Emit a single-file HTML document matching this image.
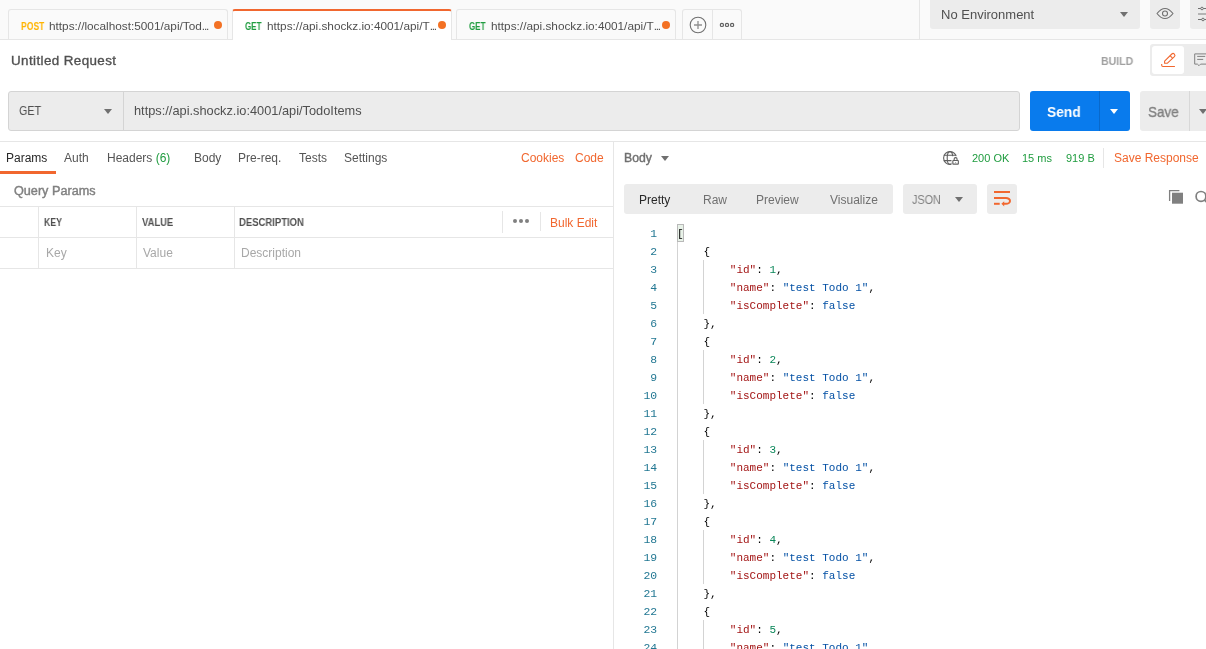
<!DOCTYPE html>
<html><head><meta charset="utf-8">
<style>
html,body{margin:0;padding:0;width:1206px;height:649px;overflow:hidden;background:#fff;font-family:"Liberation Sans",sans-serif;}
.a,.t,.b,.code,.ln,.tri{will-change:transform;}
.a{position:absolute;}
.t{position:absolute;white-space:nowrap;line-height:1;font-size:12px;color:#505050;}
.b{position:absolute;box-sizing:border-box;}
.code{position:absolute;left:677px;top:225px;font-family:"Liberation Mono",monospace;font-size:11px;line-height:18px;white-space:pre;color:#000;}
.ln{position:absolute;left:630px;width:27.2px;top:225px;font-family:"Liberation Mono",monospace;font-size:11.4px;line-height:18px;text-align:right;color:#237893;white-space:pre;}
.k{color:#a31515}.s{color:#0451a5}.n{color:#098658}.f{color:#0451a5}
.tri{position:absolute;width:0;height:0;border-left:4px solid transparent;border-right:4px solid transparent;border-top:5px solid #707070;}
</style></head><body>
<!-- top tab bar -->
<div class="b" style="left:0;top:0;width:1206px;height:40px;background:#fafafa;border-bottom:1px solid #e6e6e6;"></div>
<!-- tab1 -->
<div class="b" style="left:8px;top:9px;width:220px;height:30px;border:1px solid #e6e6e6;border-bottom:none;border-radius:3px 3px 0 0;background:#fafafa;"></div>
<div class="t" style="left:21px;top:21.5px;font-size:10px;font-weight:700;color:#ffb400;transform:scaleX(0.86);transform-origin:0 0;">POST</div>
<div class="t" style="left:49px;top:20.5px;font-size:11.8px;">https://localhost:5001/api/Tod<span style="letter-spacing:-1.2px">...</span></div>
<div class="a" style="left:214px;top:21px;width:8px;height:8px;border-radius:50%;background:#f37124;"></div>
<!-- tab2 active -->
<div class="b" style="left:232px;top:9px;width:220px;height:31px;border:1px solid #e6e6e6;border-bottom:none;border-top:2px solid #f1672f;background:#fff;border-radius:3px 3px 0 0;"></div>
<div class="t" style="left:245px;top:21.5px;font-size:10px;font-weight:700;color:#1f9c3f;transform:scaleX(0.8);transform-origin:0 0;">GET</div>
<div class="t" style="left:267px;top:20.5px;font-size:11.8px;">https://api.shockz.io:4001/api/T<span style="letter-spacing:-1.2px">...</span></div>
<div class="a" style="left:438px;top:21px;width:8px;height:8px;border-radius:50%;background:#f37124;"></div>
<!-- tab3 -->
<div class="b" style="left:456px;top:9px;width:220px;height:30px;border:1px solid #e6e6e6;border-bottom:none;border-radius:3px 3px 0 0;background:#fafafa;"></div>
<div class="t" style="left:469px;top:21.5px;font-size:10px;font-weight:700;color:#1f9c3f;transform:scaleX(0.8);transform-origin:0 0;">GET</div>
<div class="t" style="left:491px;top:20.5px;font-size:11.8px;">https://api.shockz.io:4001/api/T<span style="letter-spacing:-1.2px">...</span></div>
<div class="a" style="left:662px;top:21px;width:8px;height:8px;border-radius:50%;background:#f37124;"></div>
<!-- plus / more -->
<div class="b" style="left:682px;top:9px;width:60px;height:30px;border:1px solid #e6e6e6;border-bottom:none;border-radius:3px 3px 0 0;background:#fafafa;"></div>
<div class="a" style="left:712px;top:10px;width:1px;height:29px;background:#e6e6e6;"></div>
<svg class="a" style="left:689px;top:16px" width="18" height="18" viewBox="0 0 18 18"><circle cx="9" cy="9" r="7.8" fill="none" stroke="#707070" stroke-width="1.1"/><path d="M9 5v8M5 9h8" stroke="#909090" stroke-width="1.3"/></svg>
<svg class="a" style="left:712px;top:15px" width="30" height="20" viewBox="0 0 30 20"><circle cx="9.9" cy="9.9" r="1.6" fill="none" stroke="#606060" stroke-width="1.2"/><circle cx="15" cy="9.9" r="1.6" fill="none" stroke="#606060" stroke-width="1.2"/><circle cx="20.1" cy="9.9" r="1.6" fill="none" stroke="#606060" stroke-width="1.2"/></svg>
<!-- env -->
<div class="a" style="left:919px;top:0;width:1px;height:39px;background:#e6e6e6;"></div>
<div class="b" style="left:930px;top:-4px;width:210px;height:33px;background:#ececec;border-radius:3px;"></div>
<div class="t" style="left:941px;top:8px;font-size:13px;">No Environment</div>
<div class="tri" style="left:1120px;top:12px;"></div>
<div class="b" style="left:1150px;top:-4px;width:30px;height:33px;background:#ececec;border-radius:3px;"></div>
<svg class="a" style="left:1150px;top:0px" width="30" height="28" viewBox="0 0 30 28"><path d="M7 13.5Q15 3.4 23 13.5Q15 23.6 7 13.5Z" fill="none" stroke="#707070" stroke-width="1.1" stroke-linejoin="round"/><circle cx="15" cy="13.5" r="2.5" fill="none" stroke="#707070" stroke-width="1.1"/></svg>
<div class="b" style="left:1190px;top:-4px;width:30px;height:33px;background:#ececec;border-radius:3px;"></div>
<svg class="a" style="left:1190px;top:0px" width="16" height="28" viewBox="0 0 16 28"><path d="M8 8.5h10M8 19.5h10" stroke="#707070" stroke-width="1"/><path d="M8 14h10" stroke="#b4b4b4" stroke-width="2"/><circle cx="12" cy="8.5" r="1.3" fill="#ececec" stroke="#707070" stroke-width="1"/><circle cx="13" cy="19.5" r="1.3" fill="#ececec" stroke="#707070" stroke-width="1"/></svg>

<!-- request name row -->
<div class="t" style="left:11px;top:54px;font-size:13.4px;font-weight:400;color:#505050;-webkit-text-stroke:0.35px #505050;letter-spacing:0.4px;">Untitled Request</div>
<div class="t" style="left:1101px;top:56px;font-size:11.5px;font-weight:700;color:#a0a0a0;transform:scaleX(0.92);transform-origin:0 0;">BUILD</div>
<div class="b" style="left:1150px;top:44px;width:60px;height:32px;background:#ececec;border-radius:3px;"></div>
<div class="b" style="left:1152px;top:46px;width:32px;height:28px;background:#fff;border-radius:3px;"></div>
<svg class="a" style="left:1150px;top:42px" width="56" height="38" viewBox="0 0 56 38"><path d="M14.6 19.2L21.8 12A1.84 1.84 0 0 1 24.4 14.6L17.2 21.3H14.6Z" fill="none" stroke="#f1672f" stroke-width="1.1" stroke-linejoin="round"/><path d="M20.1 13.7L22.7 16.3" stroke="#f1672f" stroke-width="1.1"/><path d="M11.7 22v1.3q0 1.2 1.2 1.2H24.9" fill="none" stroke="#f1672f" stroke-width="1.1"/><path d="M44.7 11.9H58V22.1H50.6L49 23.7L47.4 22.1H44.7Z" fill="none" stroke="#808080" stroke-width="1"/><path d="M47.2 14.4h8M47.2 17.4h6" stroke="#808080" stroke-width="1"/></svg>

<!-- url row -->
<div class="b" style="left:8px;top:91px;width:1012px;height:40px;background:#ececec;border:1px solid #d4d4d4;border-radius:3px;"></div>
<div class="a" style="left:123px;top:92px;width:1px;height:38px;background:#d4d4d4;"></div>
<div class="t" style="left:19px;top:105px;font-size:12px;color:#505050;transform:scaleX(0.9);transform-origin:0 0;">GET</div>
<div class="tri" style="left:104px;top:109px;"></div>
<div class="t" style="left:134px;top:105px;font-size:12.8px;color:#505050;">https://api.shockz.io:4001/api/TodoItems</div>
<div class="b" style="left:1030px;top:91px;width:100px;height:40px;background:#097bed;border-radius:3px;"></div>
<div class="a" style="left:1099px;top:91px;width:1px;height:40px;background:#0869cc;"></div>
<div class="t" style="left:1047px;top:104px;font-size:15px;font-weight:700;color:#fff;transform:scaleX(0.92);transform-origin:0 0;">Send</div>
<div class="tri" style="left:1110px;top:109px;border-top-color:#fff;"></div>
<div class="b" style="left:1140px;top:91px;width:80px;height:40px;background:#ececec;border-radius:3px;"></div>
<div class="a" style="left:1189px;top:91px;width:1px;height:40px;background:#d8d8d8;"></div>
<div class="t" style="left:1148px;top:104px;font-size:15px;color:#808080;-webkit-text-stroke:0.35px #808080;transform:scaleX(0.9);transform-origin:0 0;">Save</div>
<div class="tri" style="left:1199px;top:109px;"></div>

<!-- divider -->
<div class="a" style="left:0;top:141px;width:1206px;height:1px;background:#e6e6e6;"></div>
<div class="a" style="left:613px;top:142px;width:1px;height:507px;background:#e6e6e6;"></div>

<!-- left pane -->
<div class="t" style="left:6px;top:152px;color:#282828;">Params</div>
<div class="a" style="left:0;top:171px;width:56px;height:3px;background:#f1672f;"></div>
<div class="t" style="left:64px;top:152px;color:#555;">Auth</div>
<div class="t" style="left:107px;top:152px;color:#555;">Headers <span style="color:#1f9c3f">(6)</span></div>
<div class="t" style="left:194px;top:152px;color:#555;">Body</div>
<div class="t" style="left:238px;top:152px;color:#555;">Pre-req.</div>
<div class="t" style="left:299px;top:152px;color:#555;">Tests</div>
<div class="t" style="left:344px;top:152px;color:#555;">Settings</div>
<div class="t" style="left:521px;top:152px;color:#f1672f;">Cookies</div>
<div class="t" style="left:575px;top:152px;color:#f1672f;">Code</div>
<div class="t" style="left:14px;top:185px;font-weight:400;color:#808080;-webkit-text-stroke:0.4px #808080;transform:scaleX(1.054);transform-origin:0 0;">Query Params</div>

<div class="a" style="left:0;top:206px;width:613px;height:1px;background:#e6e6e6;"></div>
<div class="a" style="left:0;top:237px;width:613px;height:1px;background:#e6e6e6;"></div>
<div class="a" style="left:0;top:268px;width:613px;height:1px;background:#e6e6e6;"></div>
<div class="a" style="left:38px;top:207px;width:1px;height:61px;background:#e6e6e6;"></div>
<div class="a" style="left:136px;top:207px;width:1px;height:61px;background:#e6e6e6;"></div>
<div class="a" style="left:234px;top:207px;width:1px;height:61px;background:#e6e6e6;"></div>
<div class="t" style="left:44px;top:218px;font-size:10px;font-weight:700;color:#505050;transform:scaleX(0.87);transform-origin:0 0;">KEY</div>
<div class="t" style="left:142px;top:218px;font-size:10px;font-weight:700;color:#505050;transform:scaleX(0.94);transform-origin:0 0;">VALUE</div>
<div class="t" style="left:239px;top:218px;font-size:10px;font-weight:700;color:#505050;transform:scaleX(0.95);transform-origin:0 0;">DESCRIPTION</div>
<div class="a" style="left:502px;top:211px;width:1px;height:22px;background:#e6e6e6;"></div>
<div class="a" style="left:540px;top:212px;width:1px;height:19px;background:#e6e6e6;"></div>
<svg class="a" style="left:511px;top:217px" width="20" height="8" viewBox="0 0 20 8"><circle cx="4" cy="4" r="2" fill="#808080"/><circle cx="10" cy="4" r="2" fill="#808080"/><circle cx="16" cy="4" r="2" fill="#808080"/></svg>
<div class="t" style="left:550px;top:217px;color:#f1672f;">Bulk Edit</div>
<div class="t" style="left:46px;top:247px;color:#a8a8a8;">Key</div>
<div class="t" style="left:143px;top:247px;color:#a8a8a8;">Value</div>
<div class="t" style="left:241px;top:247px;color:#a8a8a8;">Description</div>

<!-- right pane header -->
<div class="t" style="left:624px;top:152px;font-size:12px;font-weight:400;color:#707070;-webkit-text-stroke:0.4px #707070;transform:scaleX(1.02);transform-origin:0 0;">Body</div>
<div class="tri" style="left:661px;top:156px;"></div>
<svg class="a" style="left:938px;top:146px" width="28" height="24" viewBox="0 0 28 24"><circle cx="12" cy="12" r="6.4" fill="none" stroke="#606060" stroke-width="1.1"/><ellipse cx="12" cy="12" rx="2.8" ry="6.4" fill="none" stroke="#606060" stroke-width="1.1"/><path d="M5.8 9.2H18.2M5.8 14.6H18.2" stroke="#606060" stroke-width="1.1"/><rect x="13.5" y="10.2" width="9" height="10" fill="#fff"/><rect x="14.85" y="14.55" width="5.5" height="3.6" rx="0.5" fill="none" stroke="#606060" stroke-width="1.1"/><path d="M16.15 14.55V13.1A1.45 1.45 0 0 1 19.05 13.1V14.55" fill="none" stroke="#606060" stroke-width="1.1"/><rect x="17.2" y="16" width="0.9" height="0.9" fill="#909090"/></svg>
<div class="t" style="left:972px;top:153px;font-size:11px;color:#1f9c3f;">200 OK</div>
<div class="t" style="left:1022px;top:153px;font-size:11px;color:#1f9c3f;">15 ms</div>
<div class="t" style="left:1066px;top:153px;font-size:11px;color:#1f9c3f;">919 B</div>
<div class="a" style="left:1103px;top:148px;width:1px;height:20px;background:#e6e6e6;"></div>
<div class="t" style="left:1114px;top:152px;color:#f1672f;">Save Response</div>

<div class="b" style="left:624px;top:184px;width:269px;height:30px;background:#ececec;border-radius:3px;"></div>
<div class="t" style="left:639px;top:194px;color:#282828;">Pretty</div>
<div class="t" style="left:703px;top:194px;color:#707070;">Raw</div>
<div class="t" style="left:756px;top:194px;color:#707070;">Preview</div>
<div class="t" style="left:830px;top:194px;color:#707070;">Visualize</div>
<div class="b" style="left:903px;top:184px;width:74px;height:30px;background:#ececec;border-radius:3px;"></div>
<div class="t" style="left:912px;top:194px;font-size:12px;color:#808080;transform:scaleX(0.9);transform-origin:0 0;">JSON</div>
<div class="tri" style="left:955px;top:197px;"></div>
<div class="b" style="left:987px;top:184px;width:30px;height:30px;background:#ececec;border-radius:3px;"></div>
<svg class="a" style="left:987px;top:184px" width="30" height="30" viewBox="0 0 30 30"><path d="M7 8H23" stroke="#f1672f" stroke-width="2"/><path d="M7 14H19A4 2.9 0 0 1 19 19.8H16.5" fill="none" stroke="#f1672f" stroke-width="2"/><path d="M7 19.8H12.7" stroke="#f1672f" stroke-width="2"/><path d="M17.2 17.2L17.2 22.5L14.4 19.85Z" fill="#f1672f"/></svg>
<svg class="a" style="left:1166px;top:187px" width="40" height="20" viewBox="0 0 40 20"><path d="M3.6 14V3.6H13.4" fill="none" stroke="#808080" stroke-width="1.3"/><rect x="6" y="5.7" width="11" height="11" fill="#808080"/><circle cx="35" cy="9.4" r="4.9" fill="none" stroke="#808080" stroke-width="1.7"/><path d="M38.6 13L42 16.4" stroke="#808080" stroke-width="1.8"/></svg>

<!-- code -->
<div class="b" style="left:677px;top:224px;width:7px;height:18px;background:#e8f2e8;border:1px solid #b9b9b9;"></div>
<div class="a" style="left:677px;top:242px;width:1px;height:407px;background:#d3d3d3;"></div>
<div class="a" style="left:703px;top:260px;width:1px;height:54px;background:#d3d3d3;"></div>
<div class="a" style="left:703px;top:350px;width:1px;height:54px;background:#d3d3d3;"></div>
<div class="a" style="left:703px;top:440px;width:1px;height:54px;background:#d3d3d3;"></div>
<div class="a" style="left:703px;top:530px;width:1px;height:54px;background:#d3d3d3;"></div>
<div class="a" style="left:703px;top:620px;width:1px;height:54px;background:#d3d3d3;"></div>
<div class="ln" id="ln">1
2
3
4
5
6
7
8
9
10
11
12
13
14
15
16
17
18
19
20
21
22
23
24
25</div>
<div class="code" id="code">[
    {
        <span class="k">"id"</span>: <span class="n">1</span>,
        <span class="k">"name"</span>: <span class="s">"test Todo 1"</span>,
        <span class="k">"isComplete"</span>: <span class="f">false</span>
    },
    {
        <span class="k">"id"</span>: <span class="n">2</span>,
        <span class="k">"name"</span>: <span class="s">"test Todo 1"</span>,
        <span class="k">"isComplete"</span>: <span class="f">false</span>
    },
    {
        <span class="k">"id"</span>: <span class="n">3</span>,
        <span class="k">"name"</span>: <span class="s">"test Todo 1"</span>,
        <span class="k">"isComplete"</span>: <span class="f">false</span>
    },
    {
        <span class="k">"id"</span>: <span class="n">4</span>,
        <span class="k">"name"</span>: <span class="s">"test Todo 1"</span>,
        <span class="k">"isComplete"</span>: <span class="f">false</span>
    },
    {
        <span class="k">"id"</span>: <span class="n">5</span>,
        <span class="k">"name"</span>: <span class="s">"test Todo 1"</span>,
        <span class="k">"isComplete"</span>: <span class="f">false</span></div>
</body></html>
